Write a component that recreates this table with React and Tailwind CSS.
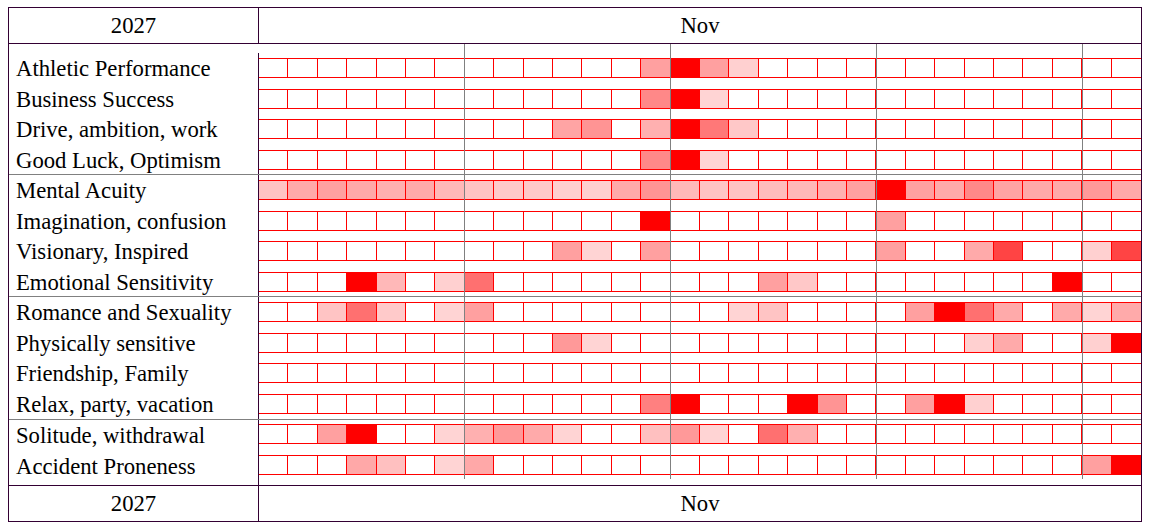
import clsx from 'clsx'

const shade = {
  '00': 'bg-[#ff0000]',
  '44': 'bg-[#ff4444]',
  '70': 'bg-[#ff7070]',
  '78': 'bg-[#ff7878]',
  '80': 'bg-[#ff8080]',
  '88': 'bg-[#ff8888]',
  '94': 'bg-[#ff9494]',
  '99': 'bg-[#ff9999]',
  a0: 'bg-[#ffa0a0]',
  a4: 'bg-[#ffa4a4]',
  a8: 'bg-[#ffa8a8]',
  aa: 'bg-[#ffaaaa]',
  b0: 'bg-[#ffb0b0]',
  b8: 'bg-[#ffb8b8]',
  bc: 'bg-[#ffbcbc]',
  c0: 'bg-[#ffc0c0]',
  c4: 'bg-[#ffc4c4]',
  c8: 'bg-[#ffc8c8]',
  ca: 'bg-[#ffcaca]',
  d0: 'bg-[#ffd0d0]',
  d4: 'bg-[#ffd4d4]',
}

// row heights (px) so every red line lands on a whole pixel
const rowH = {
  31: 'h-[31px]',
  30: 'h-[30px]',
  29: 'h-[29px]',
  34: 'h-[34px]',
}

const mental = ['c4', 'aa', 'a0', 'a8', 'b0', 'aa', 'b8', 'c4', 'ca', 'ca', 'd0', 'd0', 'aa', '94', 'b8',
  'c4', 'c4', 'bc', 'b8', 'b0', 'a0', '00', 'a0', 'aa', '88', 'a4', 'a8', 'a8', '99', 'a8']

const groups = [
  [
    ['Athletic Performance', 31, { 13: 'a0', 14: '00', 15: 'a0', 16: 'd0' }],
    ['Business Success', 30, { 13: '88', 14: '00', 15: 'd4' }],
    ['Drive, ambition, work', 31, { 10: 'a4', 11: '94', 13: 'b0', 14: '00', 15: '78', 16: 'c8' }],
    ['Good Luck, Optimism', 29, { 13: '88', 14: '00', 15: 'd4' }],
  ],
  [
    ['Mental Acuity', 31, { ...mental }],
    ['Imagination, confusion', 30, { 13: '00', 21: 'a0' }],
    ['Visionary, Inspired', 31, { 10: 'a0', 11: 'd4', 13: 'a0', 21: 'a0', 24: 'aa', 25: '44', 28: 'd0', 29: '44' }],
    ['Emotional Sensitivity', 29, { 3: '00', 4: 'b8', 6: 'd0', 7: '70', 17: 'a0', 18: 'c8', 27: '00' }],
  ],
  [
    ['Romance and Sexuality', 31, { 2: 'c4', 3: '70', 4: 'ca', 6: 'd4', 7: 'a0', 16: 'd4', 17: 'c4', 22: 'a0', 23: '00', 24: '70', 25: 'aa', 27: 'aa', 28: 'd4', 29: 'aa' }],
    ['Physically sensitive', 30, { 10: '99', 11: 'd4', 24: 'd0', 25: 'aa', 28: 'd0', 29: '00' }],
    ['Friendship, Family', 31, {}],
    ['Relax, party, vacation', 30, { 13: '80', 14: '00', 18: '00', 19: '94', 22: 'a0', 23: '00', 24: 'd0' }],
  ],
  [
    ['Solitude, withdrawal', 31, { 2: 'a0', 3: '00', 6: 'd4', 7: 'b0', 8: '99', 9: 'aa', 10: 'd4', 13: 'c0', 14: '99', 15: 'd4', 17: '70', 18: 'b0' }],
    ['Accident Proneness', 34, { 3: 'a8', 4: 'c0', 6: 'd4', 7: 'a8', 28: 'a0', 29: '00' }],
  ],
]

const days = Array.from({ length: 30 }, (_, i) => i)

function Strip({ h, cells, top }) {
  return (
    <div className={clsx(rowH[h], top)}>
      <div className="grid grid-cols-30 h-[20px] border-y border-[#ff0000]">
        {days.map(d => (
          <div key={d} className={clsx('h-full border-r border-[#ff0000] last:border-r-0', shade[cells[d]])} />
        ))}
      </div>
    </div>
  )
}

function HeaderRow({ border }) {
  return (
    <div className={clsx('flex h-[36px] border-[#330033]', border)}>
      <div className="w-[250px] border-r border-[#330033] text-center leading-[35px]">2027</div>
      <div className="flex-1 text-center leading-[35px]">Nov</div>
    </div>
  )
}

export default function App() {
  return (
    <div className="pt-[7px] pl-2 bg-white min-h-screen">
      <div className="w-[1134px] border border-[#330033] font-['Liberation_Serif',serif] text-[22.7px] text-black">
        <HeaderRow border="border-b" />

        <div className="relative">
          {groups.map((rows, gi) => (
            <div
              key={gi}
              className={clsx(
                'flex',
                gi < groups.length - 1 && 'border-b border-[#808080]',
                gi === 0 && 'pt-[9px]'
              )}
            >
              <div className="w-[250px] border-r border-[#330033] pl-[7px]">
                {rows.map(([label, h]) => (
                  <div key={label} className={clsx(rowH[h], 'leading-[32px] whitespace-nowrap')}>{label}</div>
                ))}
              </div>
              <div className="flex-1">
                {rows.map(([label, h, cells]) => (
                  <Strip key={label} h={h} cells={cells} top={gi === 3 ? 'pt-[4px]' : 'pt-[5px]'} />
                ))}
              </div>
            </div>
          ))}

          {/* week separators */}
          <div className="absolute top-0 bottom-[6px] left-[455px] w-px bg-[#808080]" />
          <div className="absolute top-0 bottom-[6px] left-[661px] w-px bg-[#808080]" />
          <div className="absolute top-0 bottom-[6px] left-[867px] w-px bg-[#808080]" />
          <div className="absolute top-0 bottom-[6px] left-[1073px] w-px bg-[#808080]" />
        </div>

        <HeaderRow border="border-t" />
      </div>
    </div>
  )
}
